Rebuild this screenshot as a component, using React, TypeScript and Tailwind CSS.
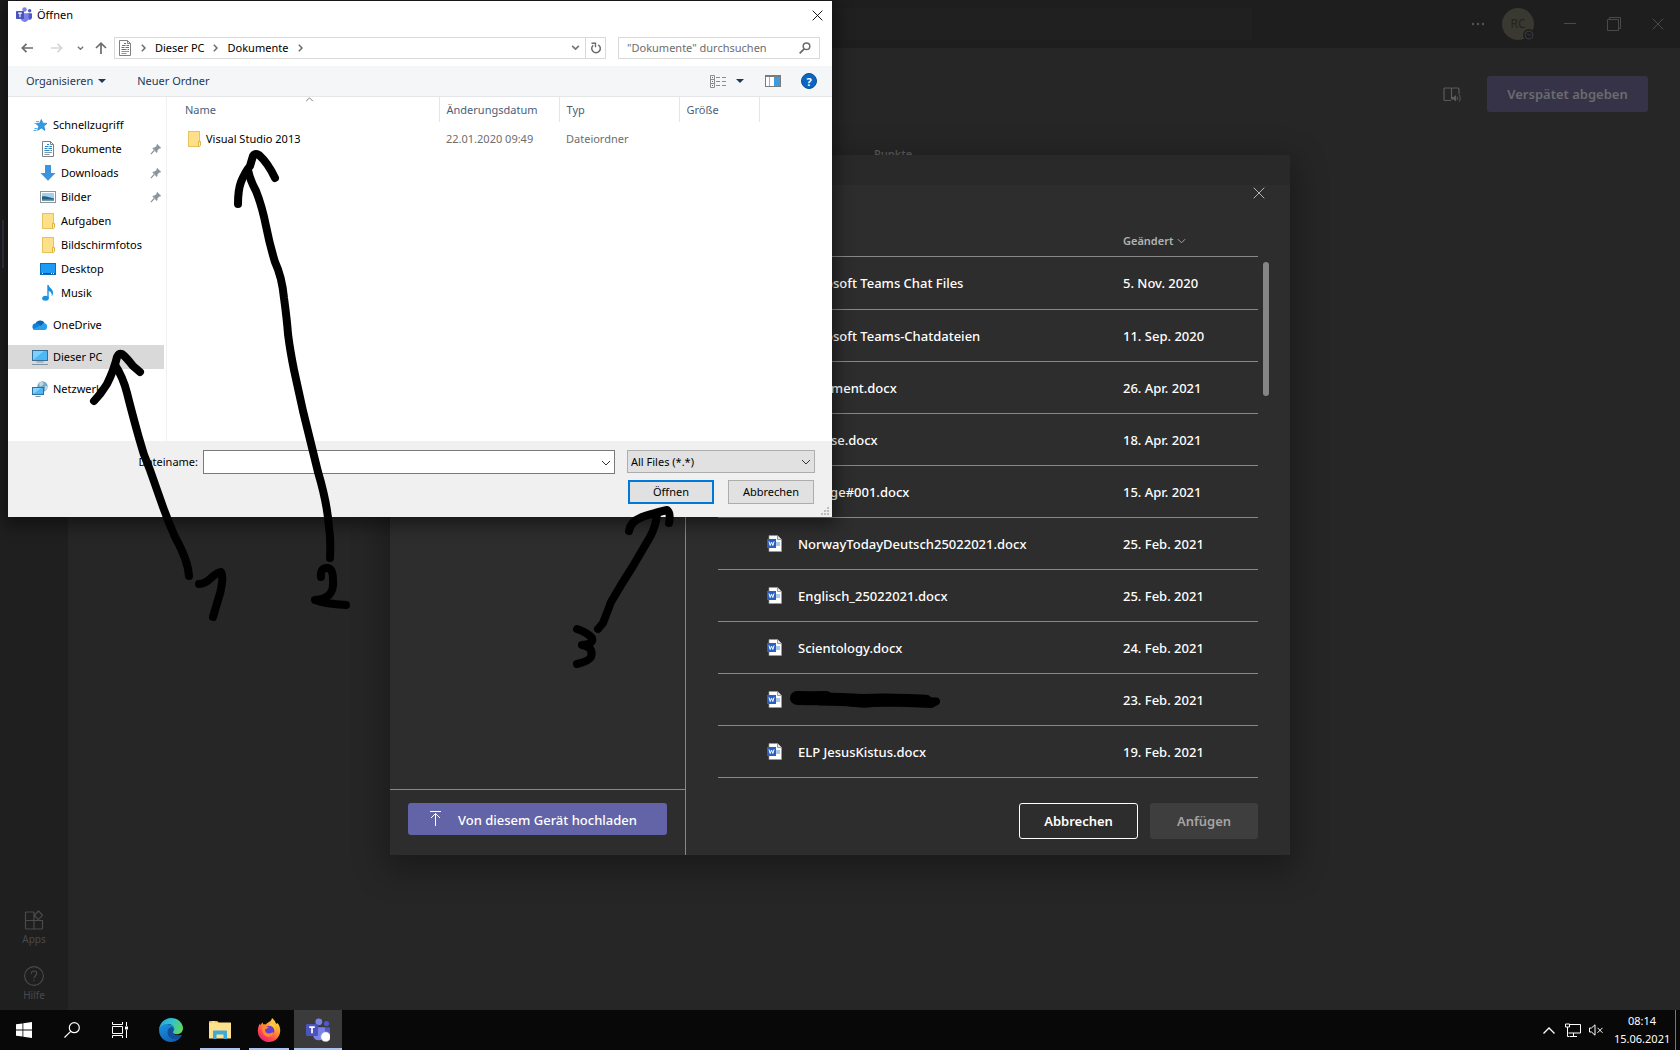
import React from "react";

/* ---------- icons ---------- */

function TeamsIcon({ className, badge }: { className: string; badge?: boolean }) {
  return (
    <svg viewBox="0 0 24 24" className={className} aria-hidden="true">
      <circle cx="20.5" cy="5.5" r="2.6" fill="#5059c9" />
      <path d="M17 9.3h6.2c.5 0 .8.3.8.8v5.4a3.8 3.8 0 0 1-5.5 3.3z" fill="#5059c9" />
      <circle cx="12.8" cy="3.8" r="3.4" fill="#7b83eb" />
      <path d="M8 9.3h10c.5 0 .9.4.9.9v6.6a6 6 0 0 1-11.8 1V10.2c0-.5.4-.9.9-.9z" fill="#7b83eb" />
      <rect x="0" y="6" width="12" height="12" rx="1" fill="#4b53bc" />
      <path d="M3.2 9.2h5.6M6 9.2v6" stroke="#fff" strokeWidth="1.7" fill="none" />
      {badge && <circle cx="19.7" cy="18.8" r="4.8" fill="#fff" stroke="#b9b9c4" strokeWidth=".6" />}
    </svg>
  );
}

function WordIcon() {
  return (
    <svg viewBox="0 0 15 17" className="h-[17px] w-[15px] shrink-0" aria-hidden="true">
      <path d="M2 .5h8.5L14.5 4.5v12H2z" fill="#fff" stroke="#9a9a9a" strokeWidth=".7" />
      <path d="M10.5.5v4h4" fill="#e4e4e4" stroke="#8a8a8a" strokeWidth=".8" />
      <rect x="8" y="7" width="5" height="4" fill="#a9c8f0" />
      <rect x="0" y="4" width="9" height="9" fill="#2b5fc0" />
      <path d="M2 6.5l1.2 4 1.3-3.5 1.3 3.5 1.2-4" stroke="#fff" strokeWidth="1" fill="none" />
    </svg>
  );
}

function DocIcon({ className }: { className: string }) {
  return (
    <svg viewBox="0 0 16 16" className={className} aria-hidden="true">
      <path d="M2.5.5h8l3 3v12h-11z" fill="#fff" stroke="#7d8287" />
      <path d="M10.5.5v3h3" fill="none" stroke="#7d8287" />
      <path d="M7 3.5H9M5 5.5h3.5M9.5 5.5H12M4.5 7.5h3M8.5 7.5H12M4.5 9.5h5M10.5 9.5H12" stroke="#2386ca" />
      <path d="M4.5 11.5H12M4.5 13.5h5" stroke="#8a96a3" />
    </svg>
  );
}

function FolderIcon({ className }: { className: string }) {
  return (
    <svg viewBox="0 0 16 16" className={className} aria-hidden="true">
      <rect x="2.5" y=".5" width="11" height="15" fill="#ffe08a" stroke="#e6c35c" />
      <path d="M12.5 15.5V10.500h2v4l-1 1z" fill="#fff0b8" stroke="#dcae35" strokeWidth=".9" />
    </svg>
  );
}

function StarIcon({ className }: { className: string }) {
  return (
    <svg viewBox="0 0 16 16" className={className} aria-hidden="true">
      <path d="M9.3 2.500l1.600 3.700 4.100.2-3.100 2.700 1 4.300-3.600-2.400-3.700 2.400 1.200-4.200L3.800 6.400l3.900-.2z" fill="#2f9be6" stroke="#1f7dc4" strokeWidth=".7" />
      <path d="M4 4.500h3M2.500 6.500h2.500M2.500 11.500h3M1.500 13.500h3" stroke="#4fb0ee" />
    </svg>
  );
}

function DownloadIcon({ className }: { className: string }) {
  return (
    <svg viewBox="0 0 16 16" className={className} aria-hidden="true">
      <path d="M5 0h6v8h4.500L8 15.800.5 8H5z" fill="#3c94dd" />
    </svg>
  );
}

function PictureIcon({ className }: { className: string }) {
  return (
    <svg viewBox="0 0 16 16" className={className} aria-hidden="true">
      <rect x=".5" y="2.500" width="15" height="11" fill="#fff" stroke="#8f959b" />
      <rect x="2" y="4" width="12" height="8" fill="#9fd0f2" />
      <path d="M2 7.500c3-.5 5 .5 12 2V12H2z" fill="#2c5d73" />
      <path d="M2 10.500h12V12H2z" fill="#6ea0b8" />
    </svg>
  );
}

function DesktopIcon({ className }: { className: string }) {
  return (
    <svg viewBox="0 0 16 16" className={className} aria-hidden="true">
      <rect x=".5" y="2.500" width="15" height="11" fill="#1e9bf5" stroke="#0d6cb8" />
      <path d="M1 12.500h14" stroke="#0b5591" />
      <path d="M2 12.500h1M11 12.500h1M13 12.500h1" stroke="#fff" />
    </svg>
  );
}

function MusicIcon({ className }: { className: string }) {
  return (
    <svg viewBox="0 0 16 16" className={className} aria-hidden="true">
      <ellipse cx="5.500" cy="13.300" rx="3.300" ry="2.500" fill="#1e8fe0" />
      <path d="M7.300 0h1.400c.3 3 4.800 3.500 4.300 8.500-.1 1.200-.7 2-1.300 2.700.6-3-1.200-4.700-3-5.200v7.300H7.300z" fill="#1e8fe0" />
    </svg>
  );
}

function CloudIcon({ className }: { className: string }) {
  return (
    <svg viewBox="0 0 16 16" className={className} aria-hidden="true">
      <path d="M3.500 7A5 5 0 0 1 12.500 5.800L9 9.500z" fill="#0b64b8" />
      <path d="M3.800 6.300c2 0 3.500.7 5 2L3 13A3.400 3.400 0 0 1 3.800 6.300z" fill="#1380d8" />
      <path d="M12.300 6A3.700 3.700 0 0 1 13 13H3c-.8 0-1.600-.4-2-1l8-3.500z" fill="#28a0e8" />
    </svg>
  );
}

function PcIcon({ className }: { className: string }) {
  return (
    <svg viewBox="0 0 16 16" className={className} aria-hidden="true">
      <rect x=".5" y="1.500" width="15" height="10" fill="#4db8f5" stroke="#3a6f95" />
      <path d="M1 11V2h11z" fill="#7dd0fb" />
      <path d="M4.500 13h7M0 15.500h16" stroke="#7f93a5" />
    </svg>
  );
}

function NetworkIcon({ className }: { className: string }) {
  return (
    <svg viewBox="0 0 16 16" className={className} aria-hidden="true">
      <circle cx="10.500" cy="5.500" r="5.200" fill="#78a9c6" />
      <path d="M7 2c2-1.500 4-1 4.500.5S9 5 8 6zM13 5l2.500 0c0 2-1 4-2.500 5z" fill="#b7d9ea" />
      <rect x=".5" y="6.500" width="11" height="7" fill="#4db8f5" stroke="#2d6f9f" />
      <path d="M1 13V7h8z" fill="#86d4fb" />
      <path d="M3.500 15.500h5" stroke="#7f93a5" />
    </svg>
  );
}

function PinIcon() {
  return (
    <svg viewBox="0 0 12 12" className="h-3 w-3" aria-hidden="true">
      <path d="M7 .8l4.200 4.200-1.200.6-.6-.1-2 2c.3 1.200 0 2-.6 2.500L2.300 5.200c.7-.7 1.500-.8 2.500-.6l2-2-.2-.7z" fill="#8d959c" />
      <path d="M4.300 7.500L.8 11.200" stroke="#8d959c" strokeWidth="1.200" />
    </svg>
  );
}

function Chevron({ className, d = "M1 1l4 4 4-4" }: { className: string; d?: string }) {
  return (
    <svg viewBox="0 0 10 6" className={className} fill="none" stroke="currentColor" aria-hidden="true">
      <path d={d} />
    </svg>
  );
}

function CrumbArrow() {
  return (
    <svg viewBox="0 0 5 8" className="h-2 w-[5px] shrink-0" fill="none" stroke="#6b6b6b" strokeWidth="1.500" aria-hidden="true">
      <path d="M.8.8L4 4 .8 7.200" />
    </svg>
  );
}

function Cross({ className }: { className: string }) {
  return (
    <svg viewBox="0 0 12 12" className={className} fill="none" stroke="currentColor" aria-hidden="true">
      <path d="M.7.7l10.600 10.600M11.300.7L.7 11.300" />
    </svg>
  );
}

/* ---------- Teams window behind the dialogs ---------- */

function TeamsWindow() {
  return (
    <div className="flex flex-1 flex-col bg-[#262626]">
      <header className="flex h-12 shrink-0 items-center bg-[#1e1e1e] text-[#4a4a4a]">
        <div className="flex-1" />
        <div className="h-8 w-[824px] bg-[#202020]" />
        <div className="flex flex-1 items-center justify-end">
          <button aria-label="Weitere Optionen" className="mr-[17px]">
            <svg viewBox="0 0 14 4" className="h-1 w-[14px]" fill="#565656">
              <circle cx="2" cy="2" r="1.200" />
              <circle cx="7" cy="2" r="1.200" />
              <circle cx="12" cy="2" r="1.200" />
            </svg>
          </button>
          <div className="relative mr-[30px] flex h-8 w-8 items-center justify-center rounded-full bg-[#393831] text-[12px] text-[#24231f]">
            RC
            <svg viewBox="0 0 12 12" className="absolute -right-px -bottom-px h-3 w-3" aria-hidden="true">
              <circle cx="6" cy="6" r="6" fill="#1e1e1e" />
              <circle cx="6" cy="6" r="4" fill="none" stroke="#3a3a3e" />
              <path d="M4.200 4.500L6 6.500l2-2" fill="none" stroke="#3a3a3e" />
            </svg>
          </div>
          <button aria-label="Minimieren" className="mr-[31px]">
            <svg viewBox="0 0 12 12" className="h-3 w-3" stroke="currentColor">
              <path d="M0 5.500h12" />
            </svg>
          </button>
          <button aria-label="Verkleinern" className="mr-[31px]">
            <svg viewBox="0 0 14 14" className="h-[14px] w-[14px]" fill="none" stroke="currentColor">
              <path d="M.5 2.500h11v11H.5zM2.500 2.500v-2h11v11h-2" />
            </svg>
          </button>
          <button aria-label="Teams schließen" className="mr-4">
            <Cross className="h-3 w-3" />
          </button>
        </div>
      </header>
      <div className="flex flex-1">
        <nav className="flex w-[68px] shrink-0 flex-col items-center bg-[#1f1f1f] pb-[7px] text-[10px] leading-4 text-[#4a4a4a]">
          <div className="mt-[172px] ml-[2px] h-12 w-[2px] self-start bg-[#34344a]" />
          <button className="mt-auto flex flex-col items-center">
            <svg viewBox="0 0 20 20" className="h-5 w-5" fill="none" stroke="currentColor" strokeWidth="1.200">
              <path d="M10 2H2.500a1 1 0 0 0-1 1v15a1 1 0 0 0 1 1h15a1 1 0 0 0 1-1v-7.500H1.500M10 2v17M14.500 1l4 4.300-4.300 4.300-3.700-4.300z" />
            </svg>
            <span className="mt-px block">Apps</span>
          </button>
          <button className="mt-[19px] flex flex-col items-center">
            <svg viewBox="0 0 20 20" className="h-5 w-5" fill="none" stroke="currentColor" strokeWidth="1.100">
              <circle cx="10" cy="10" r="9.400" />
              <path d="M7.300 7.800C7.300 6 8.500 5 10 5s2.700 1 2.700 2.600c0 2-2.700 2.300-2.700 4.600M10 13.800v1.400" />
            </svg>
            <span className="mt-px block">Hilfe</span>
          </button>
        </nav>
        <main className="flex-1">
          <div className="flex items-center justify-end pt-7 pr-8">
            <button aria-label="Plastischer Reader" className="mr-[26px] text-[#5a5a60]">
              <svg viewBox="0 0 18 16" className="h-4 w-[18px]" fill="none" stroke="currentColor" strokeWidth="1.200">
                <path d="M8 14.500H2a1 1 0 0 1-1-1V3a1 1 0 0 1 1-1h5.500a1 1 0 0 1 1 1v10.500M8.500 3a1 1 0 0 1 1-1H15a1 1 0 0 1 1 1v5.500" />
                <path d="M9 11h1.500l2.500-2v6.500l-2.500-2H9z" fill="currentColor" stroke="none" />
                <path d="M14.300 10.500V14M16.500 9c.8 1.500.8 5 0 6.500" strokeWidth="1" />
              </svg>
            </button>
            <button className="h-9 w-[161px] rounded-[3px] bg-[#363348] pt-px text-[13px] font-semibold text-[#6b6b6e]">Verspätet abgeben</button>
          </div>
          <p className="pt-8 pl-[806px] text-[11px] leading-5 font-semibold text-[#585858]">Punkte</p>
        </main>
      </div>
    </div>
  );
}

/* ---------- OneDrive file picker ---------- */

const FILES: { name: string; date: string; hidden?: boolean }[] = [
  { name: "Microsoft Teams Chat Files", date: "5. Nov. 2020" },
  { name: "Microsoft Teams-Chatdateien", date: "11. Sep. 2020" },
  { name: "Dokument.docx", date: "26. Apr. 2021" },
  { name: "Anreise.docx", date: "18. Apr. 2021" },
  { name: "Vorlage#001.docx", date: "15. Apr. 2021" },
  { name: "NorwayTodayDeutsch25022021.docx", date: "25. Feb. 2021" },
  { name: "Englisch_25022021.docx", date: "25. Feb. 2021" },
  { name: "Scientology.docx", date: "24. Feb. 2021" },
  { name: "", date: "23. Feb. 2021", hidden: true },
  { name: "ELP JesusKistus.docx", date: "19. Feb. 2021" },
];

function Scribble() {
  return (
    <svg viewBox="0 0 150 18" className="-ml-2 h-[18px] w-[150px]" fill="none" stroke="#000" strokeLinecap="round" strokeLinejoin="round" aria-hidden="true">
      <path d="M7 8l14 .3 15-.3" strokeWidth="14" />
      <path d="M30 9l22 .5 20 1 22-.5 24 .5 18 .8" strokeWidth="13" />
      <path d="M60 12.500l14 1.300 18-1.500M132 11l14 .5-6 3" strokeWidth="8" />
    </svg>
  );
}

function PickerModal() {
  return (
    <section role="dialog" aria-label="Datei auswählen" className="flex w-[900px] flex-col bg-[#2d2d2d] shadow-[0_10px_30px_6px_rgba(0,0,0,0.3)]">
      <div className="h-[30px] bg-[#292929]" />
      <div className="flex flex-1">
        <div className="flex w-[296px] shrink-0 flex-col justify-end border-r border-[#888]">
          <div className="border-t border-[#888] px-[18px] pt-[13px] pb-5">
            <button className="flex h-8 w-full items-center rounded-[3px] bg-[#6264a7] pl-[22px] text-[13px] font-medium text-white">
              <svg viewBox="0 0 11 15" className="mr-[17px] h-[15px] w-[11px]" fill="none" stroke="currentColor">
                <path d="M0 .5h11M5.500 15V2.500M1 7l4.500-4.500L10 7" />
              </svg>
              <span className="pt-[3px]">Von diesem Gerät hochladen</span>
            </button>
          </div>
        </div>
        <div className="relative flex-1 px-8 pb-4 text-[13px] text-white">
          <button aria-label="Auswahl schließen" className="absolute top-[2px] right-[25px] text-[#b5b5b5]">
            <Cross className="h-3 w-3" />
          </button>
          <div className="absolute top-[77px] right-[21px] h-[134px] w-[6px] rounded-full bg-[#858585]" />
          <table className="w-full table-fixed border-collapse text-left">
            <thead>
              <tr className="h-[71px] border-b border-[#888] align-bottom text-[11px] leading-4 text-[#b3b3b3]">
                <th className="pb-[7px] pl-20 font-semibold">Name</th>
                <th className="w-[135px] pb-[7px] font-semibold">
                  <button className="flex items-center gap-1">
                    Geändert <Chevron className="h-[6px] w-[9px]" />
                  </button>
                </th>
              </tr>
            </thead>
            <tbody className="font-medium">
              {FILES.map((f) => (
                <tr key={f.date + f.name} className="h-[52px] border-b border-[#888] first:h-[53px]">
                  <td className="pl-[49px]">
                    <div className="flex items-center gap-4">
                      <WordIcon />
                      {f.hidden ? <Scribble /> : <span className="pt-[2px]">{f.name}</span>}
                    </div>
                  </td>
                  <td className="pt-[2px]">{f.date}</td>
                </tr>
              ))}
            </tbody>
          </table>
          <div className="mt-[25px] flex justify-end gap-3 font-semibold">
            <button className="h-9 w-[119px] rounded-[3px] border border-white pt-px">Abbrechen</button>
            <button className="h-9 w-[108px] rounded-[3px] bg-[#3e3e3e] pt-px text-[#a5a5a5]">Anfügen</button>
          </div>
        </div>
      </div>
    </section>
  );
}

/* ---------- Windows open-file dialog ---------- */

type Place = { label: string; icon: (p: { className: string }) => React.ReactElement; root?: boolean; pin?: boolean; active?: boolean; gap?: boolean };

const PLACES: Place[] = [
  { label: "Schnellzugriff", icon: StarIcon, root: true },
  { label: "Dokumente", icon: DocIcon, pin: true },
  { label: "Downloads", icon: DownloadIcon, pin: true },
  { label: "Bilder", icon: PictureIcon, pin: true },
  { label: "Aufgaben", icon: FolderIcon },
  { label: "Bildschirmfotos", icon: FolderIcon },
  { label: "Desktop", icon: DesktopIcon },
  { label: "Musik", icon: MusicIcon },
  { label: "OneDrive", icon: CloudIcon, root: true, gap: true },
  { label: "Dieser PC", icon: PcIcon, root: true, gap: true, active: true },
  { label: "Netzwerk", icon: NetworkIcon, root: true, gap: true },
];

function OpenDialog() {
  return (
    <section role="dialog" aria-label="Öffnen" className="w-[824px] bg-white text-[11px] leading-4 text-black shadow-[0_4px_16px_4px_rgba(0,0,0,0.45)]">
      <div className="flex h-7 items-center pl-2">
        <TeamsIcon className="mr-[5px] h-4 w-4" />
        <h1>Öffnen</h1>
        <button aria-label="Schließen" className="mr-[9px] ml-auto">
          <Cross className="h-[11px] w-[11px]" />
        </button>
      </div>
      <div className="flex h-[37px] items-center pr-3 pl-[13px]">
        <button aria-label="Zurück">
          <svg viewBox="0 0 12 10" className="h-[10px] w-3" fill="none" stroke="#6b6b6b" strokeWidth="1.700">
            <path d="M12 5H1.500M5.500.8L1.300 5l4.200 4.200" />
          </svg>
        </button>
        <button aria-label="Vorwärts" className="ml-[18px]">
          <svg viewBox="0 0 12 10" className="h-[10px] w-3" fill="none" stroke="#d6d6d6" strokeWidth="1.700">
            <path d="M0 5h10.500M6.500.8L10.700 5 6.500 9.200" />
          </svg>
        </button>
        <button aria-label="Verlauf" className="ml-[14px] text-[#777]">
          <Chevron className="h-1 w-[7px] stroke-2" />
        </button>
        <button aria-label="Übergeordneter Ordner" className="ml-[11px]">
          <svg viewBox="0 0 12 12" className="h-3 w-3" fill="none" stroke="#6b6b6b" strokeWidth="1.700">
            <path d="M6 12V1.500M1 6l5-4.800L11 6" />
          </svg>
        </button>
        <div className="ml-[7px] flex h-[22px] flex-1 items-center border border-[#d9d9d9] pl-[2px]">
          <DocIcon className="mr-2 h-4 w-4" />
          <CrumbArrow />
          <button className="mr-2 ml-[9px] text-left">Dieser PC</button>
          <CrumbArrow />
          <button className="mr-[10px] ml-[10px] text-left">Dokumente</button>
          <CrumbArrow />
          <button aria-label="Letzte Orte" className="mr-[5px] ml-auto text-[#777]">
            <Chevron className="h-[5px] w-[9px] stroke-2" />
          </button>
          <button aria-label="Aktualisieren" className="flex h-full w-5 items-center justify-center border-l border-[#d9d9d9]">
            <svg viewBox="0 0 12 12" className="h-3 w-3" fill="none" stroke="#6b6b6b" strokeWidth="1.500">
              <path d="M8.300 2.800A4.300 4.300 0 1 1 3.200 3.200" />
              <path d="M1.500 1.200h4v4" strokeWidth="1.400" />
            </svg>
          </button>
        </div>
        <label className="ml-3 flex h-[22px] w-[202px] items-center border border-[#d9d9d9] pr-2 pl-2">
          <input aria-label="Dokumente durchsuchen" placeholder={'"Dokumente" durchsuchen'} className="min-w-0 flex-1 outline-none placeholder:text-[#6d6d6d]" />
          <svg viewBox="0 0 12 12" className="h-3 w-3" fill="none" stroke="#6b6b6b" strokeWidth="1.500" aria-hidden="true">
            <circle cx="7.500" cy="4.300" r="3.300" />
            <path d="M5.200 6.800L.7 11.300" strokeWidth="1.800" />
          </svg>
        </label>
      </div>
      <div className="flex h-[31px] items-center border-b border-[#e4e6e9] bg-[#f5f6f7] pr-[15px] pl-[18px] text-[#1e395b]">
        <button className="flex items-center">
          Organisieren
          <svg viewBox="0 0 8 4" className="ml-[5px] h-1 w-2" fill="currentColor" aria-hidden="true">
            <path d="M0 0h8L4 4z" />
          </svg>
        </button>
        <button className="ml-[31px]">Neuer Ordner</button>
        <button aria-label="Ansicht ändern" className="ml-auto flex items-center gap-[10px]">
          <svg viewBox="0 0 16 13" className="h-[13px] w-4" fill="none" stroke="#8d8d8d" aria-hidden="true">
            <path d="M.5.5h4v12h-4zM.5 4.500h4M.5 8.500h4M6 2.500h4M12 2.500h4M6 6.500h4M12 6.500h4M6 10.500h4M12 10.500h4" />
            <path d="M2 2.500h1M2 6.500h1M2 10.500h1" stroke="#55708f" />
          </svg>
          <svg viewBox="0 0 8 4" className="h-1 w-2" fill="currentColor" aria-hidden="true">
            <path d="M0 0h8L4 4z" />
          </svg>
        </button>
        <button aria-label="Vorschaufenster" className="ml-[21px]">
          <svg viewBox="0 0 16 12" className="h-3 w-4">
            <rect x=".5" y=".5" width="15" height="11" fill="#fff" stroke="#7b7b7b" />
            <path d="M0 1h16" stroke="#7b7b7b" strokeWidth="2" />
            <path d="M4.500 2v9" stroke="#aaa" />
            <rect x="9" y="2" width="6" height="9" fill="#3f9be0" />
          </svg>
        </button>
        <button aria-label="Hilfe" className="ml-5 flex h-4 w-4 items-center justify-center rounded-full border border-[#0a4f94] bg-[#0a66c2] text-[11px] leading-none font-bold text-white">
          ?
        </button>
      </div>

      <div className="flex">
        <nav aria-label="Ordner" className="w-[159px] shrink-0 border-r border-[#f0f0f0] pt-4 pb-10">
          <ul>
            {PLACES.map((p) => (
              <li key={p.label} className={p.gap ? "mt-2" : ""}>
                <button className={"flex h-6 w-[156px] items-center gap-[5px] pr-[2px] text-left " + (p.root ? "pl-6 " : "pl-8 ") + (p.active ? "bg-[#d9d9d9]" : "")}>
                  <p.icon className="h-4 w-4 shrink-0" />
                  {p.label}
                  {p.pin && (
                    <span className="ml-auto">
                      <PinIcon />
                    </span>
                  )}
                </button>
              </li>
            ))}
          </ul>
        </nav>
        <div className="relative min-w-0 flex-1">
          <Chevron d="M1 5l4-4 4 4" className="absolute top-0 left-[138px] h-[5px] w-[9px] text-[#666]" />
          <table className="w-full table-fixed border-collapse text-left">
            <thead>
              <tr className="h-[25px] text-[#4c607a] [&>th]:border-r [&>th]:border-[#e5e5e5] [&>th]:font-normal [&>th]:last:border-0">
                <th className="w-[272px] pl-[18px]">Name</th>
                <th className="w-[120px] pl-[7px]">Änderungsdatum</th>
                <th className="w-[120px] pl-[7px]">Typ</th>
                <th className="w-[80px] pl-[7px]">Größe</th>
                <th />
              </tr>
            </thead>
            <tbody>
              <tr className="text-[#6d6d6d]">
                <td className="pt-[9px] pl-[19px] text-black">
                  <span className="flex items-center gap-1">
                    <FolderIcon className="h-4 w-4" />
                    Visual Studio 2013
                  </span>
                </td>
                <td className="pt-[9px] pl-[7px]">22.01.2020 09:49</td>
                <td className="pt-[9px] pl-[7px]">Dateiordner</td>
                <td />
                <td />
              </tr>
            </tbody>
          </table>
        </div>
      </div>

      <div className="relative bg-[#f0f0f0] pt-[9px] pr-[17px] pb-[13px]">
        <div className="flex items-start">
          <label htmlFor="filename" className="w-[190px] pt-1 text-right">
            Dateiname:
          </label>
          <div className="relative ml-[5px] flex-1">
            <input id="filename" defaultValue="" className="block h-6 w-full border border-[#7a7a7a] bg-white px-1 outline-none" />
            <Chevron className="absolute top-[10px] right-1 h-[6px] w-[10px] text-[#333]" />
          </div>
          <div className="relative ml-3 w-[188px]">
            <select aria-label="Dateityp" className="block h-[23px] w-full appearance-none border border-[#adadad] bg-[#e1e1e1] px-[3px] outline-none">
              <option>All Files (*.*)</option>
            </select>
            <Chevron className="absolute top-[9px] right-1 h-[6px] w-[10px] text-[#333]" />
          </div>
        </div>
        <div className="mt-[6px] flex justify-end gap-[14px] pr-px">
          <button className="h-6 w-[86px] border-2 border-[#0078d7] bg-[#e1e1e1]">Öffnen</button>
          <button className="h-6 w-[86px] border border-[#adadad] bg-[#e1e1e1]">Abbrechen</button>
        </div>
        <svg viewBox="0 0 8 8" className="absolute right-[3px] bottom-[2px] h-2 w-2" fill="#bfbfbf" aria-hidden="true">
          <path d="M6 0h2v2H6zM3 3h2v2H3zM6 3h2v2H6zM0 6h2v2H0zM3 6h2v2H3zM6 6h2v2H6z" />
        </svg>
      </div>
    </section>
  );
}

/* ---------- hand-drawn arrows and numbers ---------- */

function Annotations() {
  return (
    <svg viewBox="0 0 700 680" className="pointer-events-none absolute top-0 left-0 h-[680px] w-[700px]" fill="none" stroke="#000" strokeWidth="8" strokeLinecap="round" strokeLinejoin="round" aria-label="1, 2, 3">
      <path d="M94 401Q101 394 107 384Q114 370 117 357Q119 353 122 354Q126 357 133 366L140 372" />
      <path d="M115 365Q123 377 127 393Q132 413 139 438Q143 454 150 470L163 507Q168 521 175 537Q188 560 189 576" />
      <path d="M199 584Q205 584 211 578Q218 572 221 572Q223 574 222 583Q221 592 218 600L213 617" />
      <path d="M238 204Q238 190 241 182Q245 172 250 166L253 156Q255 153 259 155Q268 163 275 178" />
      <path d="M248 170Q250 180 256 191Q262 206 266 226Q270 246 275 262Q282 277 284 298Q287 320 288 334Q290 350 294 370L303 411Q311 443 318 472Q327 502 329 527Q331 540 330 558" />
      <path d="M321 577Q320 568 327 568Q333 568 333 580Q334 590 329 595Q325 599 315 600Q326 604 346 605" />
      <path d="M629 531Q630 522 642 517Q650 514 667 510Q671 513 669 523" />
      <path d="M657 514Q656 526 650 537L633 566Q622 583 611 602Q607 613 603 623L598 629" />
      <path d="M577 629Q588 633 592 638Q594 644 582 645Q594 647 591 657Q589 661 577 664" />
    </svg>
  );
}

/* ---------- Windows taskbar ---------- */

function Taskbar() {
  return (
    <footer className="flex h-10 shrink-0 items-stretch bg-[#080808] text-[11px] text-white">
      <button aria-label="Start" className="flex w-12 items-center justify-center">
        <svg viewBox="0 0 16 16" className="h-4 w-4" fill="#fff">
          <path d="M0 2.300L6.500 1.400v6.200H0zM7.300 1.300L16 0v7.600H7.300zM0 8.400h6.500v6.200L0 13.700zM7.300 8.400H16V16l-8.700-1.300z" />
        </svg>
      </button>
      <button aria-label="Suche" className="flex w-12 items-center justify-center">
        <svg viewBox="0 0 16 16" className="h-4 w-4" fill="none" stroke="#fff" strokeWidth="1.200">
          <circle cx="10.300" cy="5.700" r="5" />
          <path d="M6.700 9.300L.5 15.500" />
        </svg>
      </button>
      <button aria-label="Aktive Anwendungen" className="mr-[3px] flex w-12 items-center justify-center">
        <svg viewBox="0 0 16 16" className="h-4 w-4" fill="none" stroke="#fff">
          <path d="M.5 0v2.500h10V0M.5 4.500h10v7H.5zM.5 16v-2.500h10V16M14.500 0v4M14.500 8v8" />
          <path d="M13 4.500h3v3h-3z" fill="#fff" stroke="none" />
        </svg>
      </button>
      <button aria-label="Microsoft Edge" className="mr-px flex w-12 items-center justify-center">
        <svg viewBox="0 0 24 24" className="h-6 w-6">
          <defs>
            <linearGradient id="edgeTop" x1="0" y1=".3" x2="1" y2=".6">
              <stop offset="0" stopColor="#2aa4dc" />
              <stop offset=".5" stopColor="#33c3c9" />
              <stop offset="1" stopColor="#63d65c" />
            </linearGradient>
            <linearGradient id="edgeLow" x1="0" y1="0" x2=".6" y2="1">
              <stop offset="0" stopColor="#1b93de" />
              <stop offset="1" stopColor="#0f62b4" />
            </linearGradient>
          </defs>
          <path d="M.2 10.500C1.500 6.500 5 5.800 8.500 6c4 .2 6.800 2.800 6.800 5.500 0 1.500-1 2.200-1.200 2.800.2 3 6 4 8.700 2.500C21 21 17 24 12 24 5 24-.8 18 .2 10.500z" fill="url(#edgeLow)" />
          <path d="M8.500 14.500c0-3 1.500-5 4-5.500 1.700.8 2.500 2 2.300 3.300-.2.900-.8 1.300-.8 2 .3 2.800 5.300 4.200 8.600 2.700-1.300 2.500-4 4.200-6.300 4.200-4.500 0-7.800-3.200-7.800-6.700z" fill="#134e9c" />
          <path d="M.1 11.300C.6 5 5.800 0 12 0c7 0 12 5 12 10.300 0 3.700-2.800 6-6 6-2.700 0-4-1.100-4-2 0-.7 1.200-1.300 1.200-3.200 0-2.900-3.200-5-6.500-5-4.200 0-7.800 2.300-8.600 5.200z" fill="url(#edgeTop)" />
        </svg>
      </button>
      <button aria-label="Explorer" className="relative mr-px flex w-12 items-center justify-center">
        <svg viewBox="0 0 22 18" className="h-[18px] w-[22px]">
          <path d="M0 2V.7C0 .3.300 0 .7 0h7.600l1.700 2z" fill="#f0b93e" />
          <rect x="0" y="1.500" width="22" height="16" rx=".6" fill="#fde18c" />
          <path d="M3 .8h3" stroke="#fff3c4" />
          <path d="M4 18v-7.500c0-.6.400-1 1-1h12c.6 0 1 .4 1 1V18h-3.500v-4.500h-7V18z" fill="#3fa9d9" />
        </svg>
        <span className="absolute bottom-0 left-1 h-[2px] w-10 bg-[#adc4f2]" />
      </button>
      <button aria-label="Firefox" className="relative mr-px flex w-12 items-center justify-center">
        <svg viewBox="0 0 24 24" className="h-6 w-6">
          <defs>
            <linearGradient id="foxBody" x1=".85" y1="0" x2=".2" y2="1">
              <stop offset="0" stopColor="#fff044" />
              <stop offset=".4" stopColor="#ff9a2e" />
              <stop offset=".7" stopColor="#ff4b4e" />
              <stop offset="1" stopColor="#e5177e" />
            </linearGradient>
          </defs>
          <path d="M15 0c3 2.500 3.500 4.500 4.200 5.800C20 6 20.500 5.500 20.700 5c1.800 2.600 2.700 5.300 2.500 8.200C22.800 19.300 18 24 12 24S.8 19.300.8 12.900c0-3.200 1-5.600 2.200-7.400l.5 1.700c.5-.9 1.300-2.200 2.200-3l.4 2c1 0 2 0 2.800.2C9.800 4.500 14.500 4 15 0z" fill="url(#foxBody)" />
          <circle cx="12.200" cy="13" r="5.200" fill="#6a3fd0" />
          <path d="M5.500 9c2.500-1 4.700-.6 6.500.8-2 .2-2.500 1.200-4 1.700 0 2.800 2.300 4.500 4.700 4 1.800-.4 3-1.300 4.300-.8-1 3.500-4.500 4.700-7.500 3.700C6 17 4.500 13 5.500 9z" fill="#ff8a2c" />
          <path d="M12 7.500c3.500-.3 6.500 2.500 6 6.300 1.600-3.800-.3-7.300-3.600-8.500z" fill="#ffce3a" />
        </svg>
        <span className="absolute bottom-0 left-1 h-[2px] w-10 bg-[#adc4f2]" />
      </button>
      <button aria-label="Microsoft Teams" className="relative flex w-12 items-center justify-center bg-[#3b3b3b]">
        <TeamsIcon badge className="h-6 w-6" />
        <span className="absolute bottom-0 left-0 h-[2px] w-12 bg-[#adc4f2]" />
      </button>
      <div className="ml-auto flex items-center">
        <button aria-label="Ausgeblendete Symbole" className="mr-[10px]">
          <svg viewBox="0 0 12 7" className="h-[7px] w-3" fill="none" stroke="#fff" strokeWidth="1.300">
            <path d="M.5 6.500L6 1l5.500 5.500" />
          </svg>
        </button>
        <button aria-label="Netzwerk" className="mr-2">
          <svg viewBox="0 0 16 14" className="h-[14px] w-4" fill="none" stroke="#fff">
            <path d="M5 1.500h10.500v8.500H3.500M8.500 10v3.500M5 13.500h7M.5 1h4v3h-4zM2.500 4v9.500h2" />
          </svg>
        </button>
        <button aria-label="Lautsprecher stumm" className="mr-3">
          <svg viewBox="0 0 14 12" className="h-3 w-[14px]" fill="none" stroke="#fff">
            <path d="M.5 4h2L6 .8v10.400L2.500 8h-2zM8.500 3.800l5 5M13.500 3.800l-5 5" />
          </svg>
        </button>
        <div className="mr-[6px] w-[54px] text-center leading-[18px] whitespace-nowrap">
          <div>08:14</div>
          <div className="-mx-px">15.06.2021</div>
        </div>
        <div className="mr-1 h-10 w-px bg-[#777]" />
      </div>
    </footer>
  );
}

export default function App() {
  return (
    <div className="flex min-h-screen flex-col overflow-hidden font-['Noto_Sans','Open_Sans',sans-serif]">
      <div className="relative flex flex-1 flex-col">
        <TeamsWindow />
        <div className="absolute inset-0 flex items-center justify-center">
          <PickerModal />
        </div>
        <div className="absolute top-px left-2">
          <OpenDialog />
        </div>
        <Annotations />
      </div>
      <Taskbar />
    </div>
  );
}
